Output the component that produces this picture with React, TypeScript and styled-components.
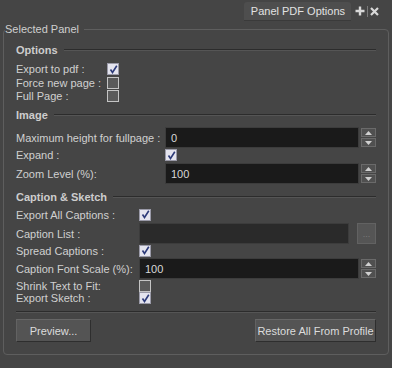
import React from 'react'
import styled, { createGlobalStyle } from 'styled-components'

const GlobalStyle = createGlobalStyle`
  body {
    margin: 0;
    background: #ffffff;
    font-family: "Liberation Sans", Arial, sans-serif;
    font-size: 11px;
  }
`

const Window = styled.div`
  width: 392px;
  height: 368px;
  background: #454545;
  color: #d2d2d2;
  display: flex;
  flex-direction: column;
`

const TopBar = styled.div`
  height: 23px;
  display: flex;
  justify-content: flex-end;
  align-items: flex-end;
  padding-right: 13px;
`

const Tab = styled.div`
  height: 18px;
  margin-bottom: 2px;
  padding: 0 6px 0 7px;
  display: flex;
  align-items: center;
  background: #4e4e4e;
  border-radius: 3px 3px 0 0;
  border-bottom: 1px solid #3a3a3a;
  color: #e2e2e2;
  font-size: 11px;
`

const TabIcons = styled.div`
  display: flex;
  align-items: center;
  gap: 2px;
  height: 20px;
  margin-left: 4px;
  margin-bottom: 2px;
`

const IconSep = styled.div`
  width: 1px;
  height: 11px;
  background: #7a7a7a;
`

const GroupBox = styled.fieldset`
  margin: 0 3px;
  padding: 0 12px 12px 12px;
  border: 1px solid #5e5e5e;
  border-radius: 4px;
  min-width: 0;
`

const GroupLegend = styled.legend`
  padding: 0 5px 0 0;
  margin-left: -11px;
  color: #cfcfcf;
  font-size: 11px;
  line-height: 12px;
`

const Header = styled.div<{ $top: number }>`
  height: 14px;
  margin-top: ${({ $top }) => $top}px;
  display: flex;
  align-items: center;
  gap: 6px;
  font-weight: bold;
  color: #cdcdcd;
  font-size: 11px;
`

const Groove = styled.div`
  flex: 1;
  height: 0;
  border-top: 1px solid #2c2c2c;
  border-bottom: 1px solid #555555;
`

const Row = styled.div<{ $cols: number; $h: number; $top?: number }>`
  display: grid;
  grid-template-columns: ${({ $cols }) => $cols}px 1fr;
  align-items: center;
  height: ${({ $h }) => $h}px;
  margin-top: ${({ $top }) => $top ?? 0}px;
`

const Label = styled.span`
  color: #d0d0d0;
  white-space: nowrap;
`

const Check = styled.span<{ $on?: boolean }>`
  width: 10px;
  height: 10px;
  border: 1px solid ${({ $on }) => ($on ? '#9a9aa8' : '#c4c4c4')};
  background: ${({ $on }) => ($on ? '#e4e4ee' : '#5a5a5a')};
  display: flex;
  align-items: center;
  justify-content: center;
`

const Field = styled.div`
  display: flex;
  align-items: center;
  gap: 2px;
  height: 100%;
`

const NumInput = styled.div<{ $dim?: boolean }>`
  flex: 1;
  height: 21px;
  box-sizing: border-box;
  background: ${({ $dim }) => ($dim ? '#2a2a2a' : '#1a1a1a')};
  border: 1px solid #3c3c3c;
  color: #d8d8d8;
  display: flex;
  align-items: center;
  padding-left: 5px;
  font-size: 11px;
`

const Spinner = styled.div`
  width: 15px;
  display: flex;
  flex-direction: column;
  gap: 1px;
`

const SpinBtn = styled.div`
  height: 9px;
  box-sizing: border-box;
  background: #505050;
  border: 1px solid #6a6a6a;
  display: flex;
  align-items: center;
  justify-content: center;
`

const DotsButton = styled.div`
  width: 19px;
  height: 21px;
  margin-left: 6px;
  box-sizing: border-box;
  background: #555555;
  border: 1px solid #626262;
  color: #7a7a7a;
  font-size: 9px;
  display: flex;
  align-items: center;
  justify-content: center;
`

const Separator = styled.div`
  margin-top: 7px;
  border-top: 1px solid #2c2c2c;
  border-bottom: 1px solid #555555;
`

const ButtonBar = styled.div`
  display: flex;
  justify-content: space-between;
  margin-top: 6px;
`

const Button = styled.div<{ $w: number }>`
  width: ${({ $w }) => $w}px;
  height: 23px;
  box-sizing: border-box;
  background: #545454;
  border: 1px solid #2e2e2e;
  border-top-color: #666666;
  border-left-color: #626262;
  color: #dcdcdc;
  display: flex;
  align-items: center;
  justify-content: center;
  font-size: 11px;
`

const Tick = () => (
  <svg width="9" height="9" viewBox="0 0 9 9">
    <path d="M1.5 4.5 L3.5 7.5 L7.8 0.8" fill="none" stroke="#2c3a78" strokeWidth="1.6" />
  </svg>
)

const Arrow = ({ up }: { up?: boolean }) => (
  <svg width="7" height="4" viewBox="0 0 7 4">
    <path d={up ? 'M0 4 L3.5 0 L7 4 Z' : 'M0 0 L3.5 4 L7 0 Z'} fill="#d0d0d0" />
  </svg>
)

const SpinField = ({ value }: { value: string }) => (
  <Field>
    <NumInput>{value}</NumInput>
    <Spinner>
      <SpinBtn><Arrow up /></SpinBtn>
      <SpinBtn><Arrow /></SpinBtn>
    </Spinner>
  </Field>
)

export default function App() {
  return (
    <>
      <GlobalStyle />
      <Window>
        <TopBar>
          <Tab>Panel PDF Options</Tab>
          <TabIcons>
            <svg width="10" height="10" viewBox="0 0 10 10">
              <path d="M5 0.5 V9.5 M0.5 5 H9.5" stroke="#d8d8d8" strokeWidth="2.4" />
            </svg>
            <IconSep />
            <svg width="9" height="9" viewBox="0 0 9 9">
              <path d="M1 1 L8 8 M8 1 L1 8" stroke="#d8d8d8" strokeWidth="2.2" />
            </svg>
          </TabIcons>
        </TopBar>
        <GroupBox>
          <GroupLegend>Selected Panel</GroupLegend>

          <Header $top={8}>Options<Groove /></Header>
          <Row $cols={91} $h={14} $top={5}>
            <Label>Export to pdf :</Label>
            <Check $on><Tick /></Check>
          </Row>
          <Row $cols={91} $h={13}>
            <Label>Force new page :</Label>
            <Check />
          </Row>
          <Row $cols={91} $h={13}>
            <Label>Full Page :</Label>
            <Check />
          </Row>

          <Header $top={6}>Image<Groove /></Header>
          <Row $cols={149} $h={21} $top={5}>
            <Label>Maximum height for fullpage :</Label>
            <SpinField value="0" />
          </Row>
          <Row $cols={149} $h={14}>
            <Label>Expand :</Label>
            <Check $on><Tick /></Check>
          </Row>
          <Row $cols={149} $h={21} $top={1}>
            <Label>Zoom Level (%):</Label>
            <SpinField value="100" />
          </Row>

          <Header $top={6}>Caption &amp; Sketch<Groove /></Header>
          <Row $cols={123} $h={13} $top={4}>
            <Label>Export All Captions :</Label>
            <Check $on><Tick /></Check>
          </Row>
          <Row $cols={123} $h={21} $top={2}>
            <Label>Caption List :</Label>
            <Field>
              <NumInput $dim />
              <DotsButton>...</DotsButton>
            </Field>
          </Row>
          <Row $cols={123} $h={13}>
            <Label>Spread Captions :</Label>
            <Check $on><Tick /></Check>
          </Row>
          <Row $cols={123} $h={21} $top={1}>
            <Label>Caption Font Scale (%):</Label>
            <SpinField value="100" />
          </Row>
          <Row $cols={123} $h={12} $top={1}>
            <Label>Shrink Text to Fit:</Label>
            <Check />
          </Row>
          <Row $cols={123} $h={12}>
            <Label>Export Sketch :</Label>
            <Check $on><Tick /></Check>
          </Row>

          <Separator />
          <ButtonBar>
            <Button $w={75}>Preview...</Button>
            <Button $w={121}>Restore All From Profile</Button>
          </ButtonBar>
        </GroupBox>
      </Window>
    </>
  )
}
